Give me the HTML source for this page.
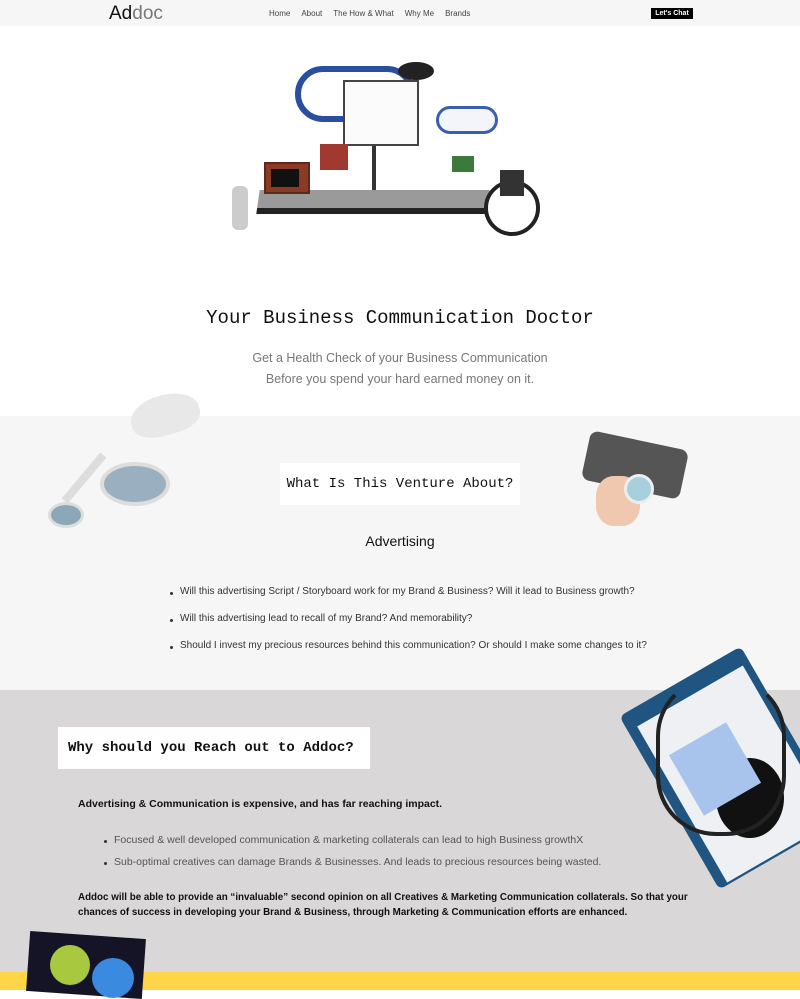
<!DOCTYPE html>
<html><head><meta charset="utf-8"><style>
*{margin:0;padding:0;box-sizing:border-box}
body{width:800px;height:990px;overflow:hidden;background:#fff;font-family:"Liberation Sans",sans-serif;position:relative}
.abs{position:absolute}
.nav{top:0;left:0;width:800px;height:26px;background:#f6f6f6}
.mono{font-family:"Liberation Mono",monospace;white-space:nowrap}
ul{list-style:none}
li{position:relative;padding-left:10px;white-space:nowrap}
li:before{content:"";position:absolute;left:0;top:6px;width:3px;height:3px;border-radius:50%;background:#333}
</style></head><body>
<div class="abs nav"></div>
<div class="abs" style="left:109px;top:3px;font-size:19px;color:#111">Ad<span style="color:#777">doc</span></div>
<div class="abs" style="top:9px;left:269px;font-size:8px;color:#444;white-space:nowrap">
<span style="margin-right:11px">Home</span><span style="margin-right:11px">About</span><span style="margin-right:11px">The How &amp; What</span><span style="margin-right:11px">Why Me</span><span>Brands</span></div>
<div class="abs" style="left:651px;top:8px;width:42px;height:11px;background:#000;color:#fff;font-size:7px;font-weight:bold;text-align:center;line-height:11px">Let's Chat</div>

<div class="abs" style="left:295px;top:66px;width:120px;height:56px;border-radius:30px;background:#fff;border:6px solid #2a4fa0"></div>
<div class="abs" style="left:436px;top:106px;width:62px;height:28px;border-radius:14px;background:#f3f5fa;border:3px solid #3a5fb0"></div>
<div class="abs" style="left:343px;top:80px;width:76px;height:66px;background:#fbfbfb;border:2px solid #444"></div>
<div class="abs" style="left:372px;top:146px;width:4px;height:66px;background:#333"></div>
<div class="abs" style="left:398px;top:62px;width:36px;height:18px;border-radius:50%;background:#222"></div>
<div class="abs" style="left:258px;top:190px;width:230px;height:24px;background:#9a9a9a;border-bottom:6px solid #222;transform:skewX(-8deg)"></div>
<div class="abs" style="left:264px;top:162px;width:46px;height:32px;background:#8a3a25;border:2px solid #5a2a1a"><div style="margin:5px;width:28px;height:18px;background:#111"></div></div>
<div class="abs" style="left:320px;top:144px;width:28px;height:26px;background:#a03a30"></div>
<div class="abs" style="left:452px;top:156px;width:22px;height:16px;background:#3a7a3a"></div>
<div class="abs" style="left:232px;top:186px;width:16px;height:44px;background:#ccc;border-radius:6px"></div>
<div class="abs" style="left:484px;top:180px;width:56px;height:56px;border-radius:50%;border:4px solid #222"></div>
<div class="abs" style="left:500px;top:170px;width:24px;height:26px;background:#333"></div>

<div class="abs mono" style="left:0;width:800px;top:307px;text-align:center;font-size:19px;color:#111">Your Business Communication Doctor</div>
<div class="abs" style="left:0;width:800px;top:348px;text-align:center;font-size:12.5px;color:#777;line-height:21px">Get a Health Check of your Business Communication<br>Before you spend your hard earned money on it.</div>

<div class="abs" style="left:0;top:416px;width:800px;height:274px;background:#f6f6f6"></div>
<div class="abs" style="left:130px;top:395px;width:70px;height:40px;border-radius:50% 50% 40% 40%;background:#e8e8e8;transform:rotate(-15deg)"></div>
<div class="abs" style="left:100px;top:462px;width:70px;height:44px;border-radius:50%;background:#9ab0c0;border:4px solid #ddd"></div>
<div class="abs" style="left:48px;top:502px;width:36px;height:26px;border-radius:50%;background:#8aa8b8;border:3px solid #ddd"></div>
<div class="abs" style="left:80px;top:448px;width:8px;height:60px;background:#ddd;transform:rotate(40deg)"></div>
<div class="abs" style="left:585px;top:440px;width:100px;height:50px;background:#555;border-radius:8px;transform:rotate(12deg)"></div>
<div class="abs" style="left:596px;top:476px;width:44px;height:50px;border-radius:40%;background:#f0c8b0"></div>
<div class="abs" style="left:624px;top:474px;width:30px;height:30px;border-radius:50%;background:#a8d0dc;border:3px solid #eee"></div>

<div class="abs mono" style="left:280px;top:463px;width:240px;height:42px;background:#fff;text-align:center;line-height:42px;font-size:14px;color:#111">What Is This Venture About?</div>
<div class="abs" style="left:0;width:800px;top:533px;text-align:center;font-size:14px;color:#111">Advertising</div>
<ul class="abs" style="left:170px;top:586px;font-size:10px;color:#333">
<li style="margin-bottom:16px">Will this advertising Script / Storyboard work for my Brand &amp; Business? Will it lead to Business growth?</li>
<li style="margin-bottom:16px">Will this advertising lead to recall of my Brand? And memorability?</li>
<li>Should I invest my precious resources behind this communication? Or should I make some changes to it?</li></ul>

<div class="abs" style="left:0;top:690px;width:800px;height:282px;background:#d9d7d7"></div>
<div class="abs" style="left:0;top:972px;width:800px;height:18px;background:#fed547"></div>
<div class="abs" style="left:660px;top:668px;width:140px;height:200px;background:#1f5580;transform:rotate(-30deg);border-radius:6px"></div>
<div class="abs" style="left:674px;top:684px;width:122px;height:180px;background:#eef0f4;transform:rotate(-30deg)"></div>
<div class="abs" style="left:716px;top:758px;width:68px;height:80px;border-radius:50%;background:#111"></div>
<div class="abs" style="left:682px;top:734px;width:66px;height:70px;background:#a8c4ec;transform:rotate(-30deg)"></div>
<div class="abs" style="left:656px;top:676px;width:130px;height:160px;border:4px solid #222;border-radius:60px;border-top-color:transparent"></div>
<div class="abs" style="left:28px;top:935px;width:116px;height:60px;background:#141426;transform:rotate(4deg)"></div>
<div class="abs" style="left:50px;top:945px;width:40px;height:40px;border-radius:50%;background:#a8c840"></div>
<div class="abs" style="left:92px;top:958px;width:42px;height:40px;border-radius:50%;background:#3a8ae0"></div>

<div class="abs mono" style="left:58px;top:727px;width:312px;height:42px;background:#fff;line-height:42px;padding-left:10px;font-size:14px;font-weight:bold;color:#111">Why should you Reach out to Addoc?</div>
<div class="abs" style="left:78px;top:798px;font-size:10.5px;font-weight:bold;color:#111;white-space:nowrap">Advertising &amp; Communication is expensive, and has far reaching impact.</div>
<ul class="abs" style="left:104px;top:834px;font-size:10.5px;color:#555">
<li style="margin-bottom:10px">Focused &amp; well developed communication &amp; marketing collaterals can lead to high Business growthX</li>
<li>Sub-optimal creatives can damage Brands &amp; Businesses. And leads to precious resources being wasted.</li></ul>
<div class="abs" style="left:78px;top:890px;width:620px;font-size:9.8px;font-weight:bold;color:#111;line-height:15px">Addoc will be able to provide an “invaluable” second opinion on all Creatives &amp; Marketing Communication collaterals. So that your chances of success in developing your Brand &amp; Business, through Marketing &amp; Communication efforts are enhanced.</div>
</body></html>
